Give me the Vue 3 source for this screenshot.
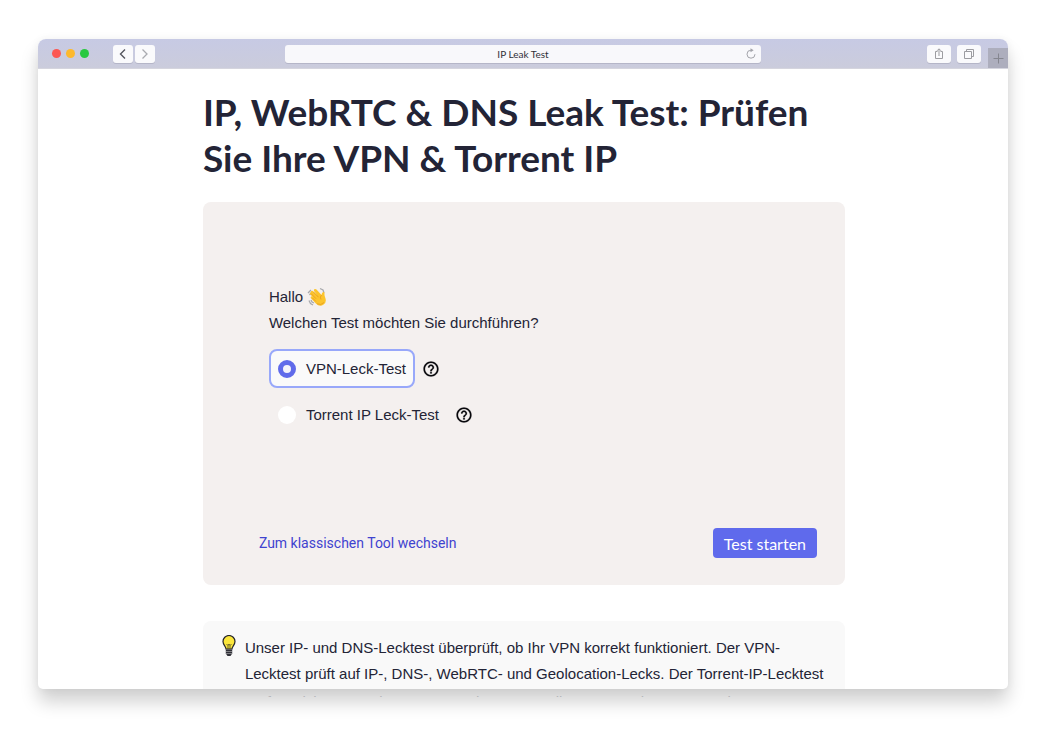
<script setup>
import { ref } from 'vue'

const selected = ref('vpn')
const tests = [
  { id: 'vpn', label: 'VPN-Leck-Test' },
  { id: 'torrent', label: 'Torrent IP Leck-Test' }
]
</script>

<template>
  <div class="stage">
    <div class="window">
      <header class="bar">
        <div class="lights"><i class="red"></i><i class="yellow"></i><i class="green"></i></div>
        <div class="nav">
          <button type="button" aria-label="Zurück">
            <svg width="20" height="18" viewBox="0 0 20 18"><path d="M12 4.500 7.500 9l4.500 4.500" fill="none" stroke="#55565e" stroke-width="1.400" /></svg>
          </button>
          <button type="button" aria-label="Vorwärts">
            <svg width="20" height="18" viewBox="0 0 20 18"><path d="M7.500 4.500 12 9l-4.500 4.500" fill="none" stroke="#a9aab0" stroke-width="1.300" /></svg>
          </button>
        </div>
        <div class="address">
          <span>IP Leak Test</span>
          <button type="button" class="reload" aria-label="Neu laden">
            <svg width="12" height="12" viewBox="0 0 12 12"><path d="M6 2.200a4 4 0 1 0 4 4" fill="none" stroke="#a3a4aa" stroke-width="1" /><path d="M5.500.2 8.700 2.200 5.500 4.200z" fill="#a3a4aa" /></svg>
          </button>
        </div>
        <div class="tools">
          <button type="button" aria-label="Teilen">
            <svg width="24" height="18" viewBox="0 0 24 18"><path d="M10.500 6.500h-2v7h7v-7h-2M12 11V4M10 5.800 12 3.800l2 2" fill="none" stroke="#9c9ca1" stroke-width="1" /></svg>
          </button>
          <button type="button" aria-label="Tabs anzeigen">
            <svg width="24" height="18" viewBox="0 0 24 18"><path d="M7.500 6.500h7v7h-7zM9.500 6.500v-2h7v7h-2" fill="none" stroke="#9c9ca1" stroke-width="1" /></svg>
          </button>
        </div>
        <button type="button" class="plus" aria-label="Neuer Tab">
          <svg width="20" height="20" viewBox="0 0 20 20"><path d="M5.500 10.500h10M10.500 5.500v10" stroke="#85868f" /></svg>
        </button>
      </header>

      <main>
        <h1>IP, WebRTC &amp; DNS Leak Test: Prüfen Sie Ihre VPN &amp; Torrent IP</h1>

        <form class="card" @submit.prevent>
          <fieldset>
            <legend>
              <span class="hello">Hallo
                <svg class="wave" width="20" height="20" viewBox="0 0 20 20" aria-hidden="true">
                  <path d="M1 6 4 3M2.500 8 5 5M13 1.500l3 1.500 1 3M2 13.500l1.500 3L6 18M4 13l1 2 2 1" fill="none" stroke="#a8a9ad" stroke-width="1.300" />
                  <path d="M4 4.200q1.200-1 2.200 0l4 4L7 4q-.4-1.500.8-2 1-.3 1.700.6l5 5.400q.2-2.600 1.800-3 1.300-.1 1.200 1.400-.2 1.800.6 3.800 2 5-1.500 7.300-4 2.700-7.500-.8l-5.200-5.500q-.7-1.200.3-1.800.8-.4 1.600.3L4 8.300 3 7q-.4-1.200.6-1.600z" fill="#fcc42c" />
                  <path d="m4 6.500 5 5.200M6.500 5l5 5.200M5.500 11l3.500 3.500M14.500 8q-2 2-.5 4.500M10 16.800q4 2 7-1.300" fill="none" stroke="#e59a22" stroke-width=".8" />
                </svg>
              </span>
              <span>Welchen Test möchten Sie durchführen?</span>
            </legend>
            <div v-for="test in tests" :key="test.id" class="row">
              <label class="option" :class="{ chosen: selected === test.id }">
                <input v-model="selected" type="radio" name="test" :value="test.id" />
                <span>{{ test.label }}</span>
              </label>
              <button type="button" class="help" :aria-label="'Hilfe: ' + test.label">
                <svg width="18" height="18" viewBox="0 0 24 24"><path d="M11 18h2v-2h-2v2zm1-16C6.480 2 2 6.480 2 12s4.480 10 10 10 10-4.480 10-10S17.520 2 12 2zm0 18c-4.410 0-8-3.590-8-8s3.590-8 8-8 8 3.590 8 8-3.590 8-8 8zm0-14c-2.210 0-4 1.790-4 4h2c0-1.100.9-2 2-2s2 .9 2 2c0 2-3 1.750-3 5h2c0-2.250 3-2.500 3-5 0-2.210-1.790-4-4-4z" fill="#08080c" stroke="#08080c" stroke-width=".3" /></svg>
              </button>
            </div>
          </fieldset>
          <div class="actions">
            <a href="#">Zum klassischen Tool wechseln</a>
            <button type="submit">Test starten</button>
          </div>
        </form>

        <section class="info">
          <svg class="bulb" width="14" height="22" viewBox="0 0 14 22" aria-hidden="true">
            <path d="M4 14C4 11.500 1 10 1 6.500a6 6 0 0 1 12 0C13 10 10 11.500 10 14z" fill="#fbe63c" stroke="#25252b" stroke-width="1.200" />
            <path d="M4.500 9 6 10.500 7 9l1 1.500L9.500 9M6 10.500V14M8 10.500V14" fill="none" stroke="#4a4520" stroke-width=".8" />
            <path d="M3.800 14.500h6.400v4L8.500 21h-3l-1.700-2.500z" fill="#303038" />
            <path d="M4 16.500h6M4 18.500h6" stroke="#bbb" stroke-width=".6" />
          </svg>
          <p>Unser IP- und DNS-Lecktest überprüft, ob Ihr VPN korrekt funktioniert. Der VPN-Lecktest prüft auf IP-, DNS-, WebRTC- und Geolocation-Lecks. Der Torrent-IP-Lecktest</p>
        </section>
      </main>
    </div>
    <div class="below"><p>prüft, welche IP- und DNS-Server Ihr Torrent-Client verwendet. Lassen Sie unseren</p></div>
  </div>
</template>

<style>
body { margin: 0; background: #fff; }
</style>

<style scoped>
.stage { box-sizing: border-box; min-height: 100vh; padding: 39px 37px 50px 38px; font-family: "Liberation Sans", Arial, sans-serif; color: #232436; }
.window { position: relative; display: flex; flex-direction: column; height: calc(100vh - 97px); background: #fff; border-radius: 8px 8px 5px 5px; overflow: hidden; }
.stage::before { content: ""; position: absolute; inset: 39px 37px 58px 38px; border-radius: 8px; box-shadow: 0 13px 18px rgba(0,0,0,.18), 0 0 10px rgba(0,0,0,.05); }
button { border: 0; padding: 0; font: inherit; background: none; }
svg { display: block; }
.bar { display: flex; flex: none; align-items: center; height: 30px; box-sizing: border-box; padding-left: 14px; background: linear-gradient(#c7cae4, #cbccdc); border-bottom: 1px solid #d5d5de; }
.lights { display: flex; gap: 5px; width: 61px; }
.lights i { width: 9px; height: 9px; border-radius: 50%; }
.red { background: #fc5753; } .yellow { background: #fdb92d; } .green { background: #28c840; }
.nav { display: flex; gap: 2px; }
.nav button, .tools button { background: #fafafc; border-radius: 3px; box-shadow: 0 1px 0 #b5b6c8; }
.address { display: flex; align-items: center; justify-content: center; position: relative; flex: 1; height: 18px; margin: 0 166px 0 130px; border-radius: 3px; background: #f8f8fb; box-shadow: 0 1px 0 #b5b6c8; font-family: Lato, sans-serif; font-size: 10px; line-height: 18px; color: #303038; }
.reload { position: absolute; right: 4px; top: 3px; }
.tools { display: flex; gap: 6px; }
.plus { align-self: flex-end; margin-left: 7px; background: #adaebd; }
main { flex: 1; min-height: 0; width: 66.200%; margin-left: 17%; }
h1 { margin: 20px 0 21px; font-family: Lato, sans-serif; font-weight: 700; font-size: 37px; line-height: 46px; }
.card { box-sizing: border-box; padding: 82px 28px 27px 56px; background: #f4f0ef; border-radius: 8px; }
fieldset { border: 0; margin: 0 0 87px; padding: 0 0 0 10px; min-width: 0; }
legend { display: flex; flex-direction: column; padding: 0; margin-bottom: 13px; font-size: 15px; line-height: 26px; }
.hello { display: flex; align-items: center; gap: 4px; }
.row { display: flex; align-items: center; gap: 7px; margin-bottom: 7px; }
.option { display: flex; align-items: center; gap: 10px; box-sizing: border-box; height: 39px; padding: 0 7px; border: 2px solid transparent; border-radius: 8px; font-size: 15px; }
.chosen { background: #fafafa; border-color: #98a8fa; }
input { appearance: none; width: 18px; height: 18px; margin: 0; border-radius: 50%; background: #fff; }
input:checked { border: 5px solid #606bea; background: #f4f3fb; }
.actions { display: flex; align-items: center; justify-content: space-between; }
.actions a { color: #3f43cf; font-family: Roboto, sans-serif; font-size: 14px; text-decoration: none; }
.actions button { height: 30px; padding: 0 11px; border-radius: 4px; background: #5f6aec; color: #fff; font-family: Lato, sans-serif; font-size: 16px; }
.info { display: flex; gap: 9px; margin-top: 36px; padding: 14px 12px 8px 19px; background: #f9f9f9; border-radius: 8px 8px 0 0; }
.bulb { flex: none; }
p { margin: 0; font-size: 15px; line-height: 26px; }
.below { position: relative; height: 8px; padding-left: 207px; overflow: hidden; }
.below p { color: #b4b5b9; white-space: nowrap; }
</style>
